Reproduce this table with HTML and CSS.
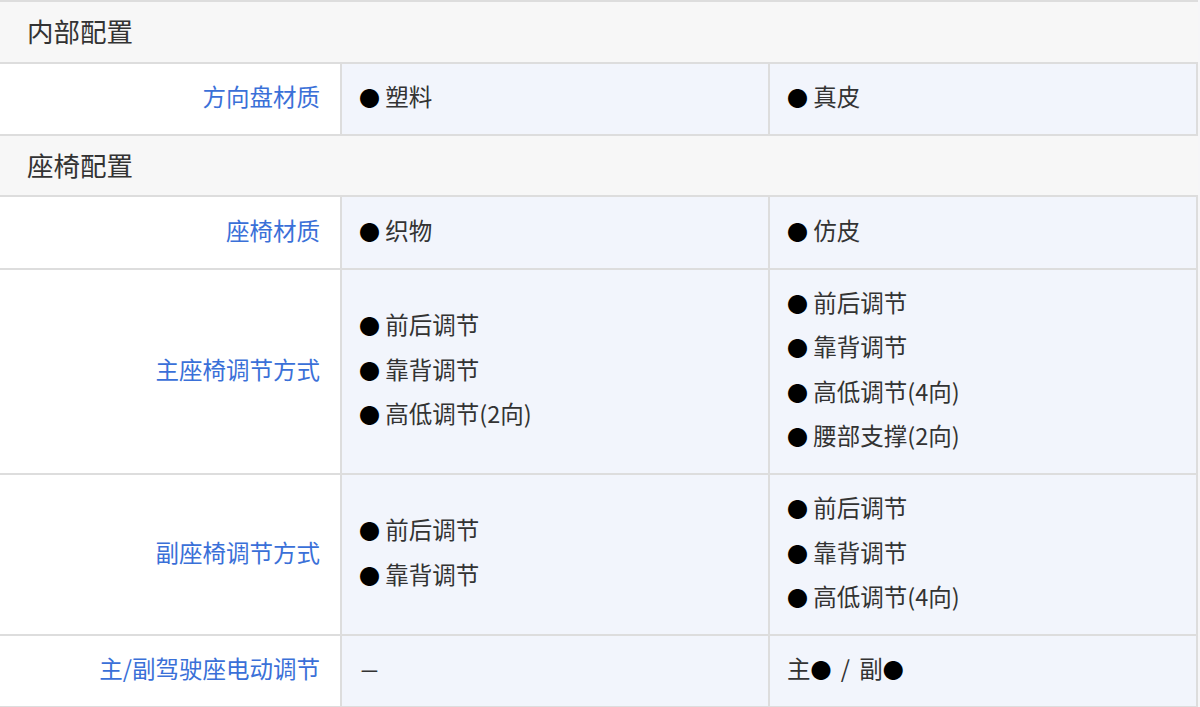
FILE: index.html
```html
<!DOCTYPE html>
<html lang="zh-CN">
<head>
<meta charset="utf-8">
<title>配置</title>
<link rel="stylesheet" href="styles.css">
</head>
<body>
<div class="table">
  <div class="section">内部配置</div>
  <div class="row">
    <div class="label">方向盘材质</div>
    <div class="val"><div class="item"><span class="dot">●</span> 塑料</div></div>
    <div class="val"><div class="item"><span class="dot">●</span> 真皮</div></div>
  </div>
  <div class="section">座椅配置</div>
  <div class="row">
    <div class="label">座椅材质</div>
    <div class="val"><div class="item"><span class="dot">●</span> 织物</div></div>
    <div class="val"><div class="item"><span class="dot">●</span> 仿皮</div></div>
  </div>
  <div class="row">
    <div class="label">主座椅调节方式</div>
    <div class="val">
      <div class="item"><span class="dot">●</span> 前后调节</div>
      <div class="item"><span class="dot">●</span> 靠背调节</div>
      <div class="item"><span class="dot">●</span> 高低调节(2向)</div>
    </div>
    <div class="val">
      <div class="item"><span class="dot">●</span> 前后调节</div>
      <div class="item"><span class="dot">●</span> 靠背调节</div>
      <div class="item"><span class="dot">●</span> 高低调节(4向)</div>
      <div class="item"><span class="dot">●</span> 腰部支撑(2向)</div>
    </div>
  </div>
  <div class="row">
    <div class="label">副座椅调节方式</div>
    <div class="val">
      <div class="item"><span class="dot">●</span> 前后调节</div>
      <div class="item"><span class="dot">●</span> 靠背调节</div>
    </div>
    <div class="val">
      <div class="item"><span class="dot">●</span> 前后调节</div>
      <div class="item"><span class="dot">●</span> 靠背调节</div>
      <div class="item"><span class="dot">●</span> 高低调节(4向)</div>
    </div>
  </div>
  <div class="row">
    <div class="label">主/副驾驶座电动调节</div>
    <div class="val"><div class="item"><span class="dash">–</span></div></div>
    <div class="val"><div class="item pair">主<span class="dot">●</span> / 副<span class="dot">●</span></div></div>
  </div>
</div>
</body>
</html>
```

FILE: styles.css
```css
html, body {
  margin: 0;
  padding: 0;
}
body {
  background: #f6f6f8;
  font-family: "Noto Sans CJK SC", "Noto Sans", sans-serif;
  color: #333;
}
.table {
  width: 1198px;
  border-top: 2px solid #dddddd;
  background: #fff;
}
.section {
  height: 61.5px;
  box-sizing: border-box;
  display: flex;
  align-items: center;
  padding-left: 27px;
  padding-bottom: 2px;
  font-size: 26.5px;
  background: #f7f7f7;
  border-bottom: 2px solid #dddddd;
  color: #333;
}
.row {
  display: grid;
  grid-template-columns: 342px 428px 428px;
  border-bottom: 2px solid #dddddd;
}
.label {
  display: flex;
  align-items: center;
  justify-content: flex-end;
  padding-right: 20px;
  padding-bottom: 5px;
  border-right: 2px solid #dddddd;
  font-size: 23.5px;
  color: #3a70d8;
  background: #fff;
}
.val {
  display: flex;
  flex-direction: column;
  justify-content: center;
  padding: 10.5px 0 15.5px 17px;
  border-right: 2px solid #dddddd;
  background: #f2f5fc;
  font-size: 23.5px;
}
.item {
  line-height: 44.3px;
  height: 44.3px;
  white-space: nowrap;
}
.pair {
  word-spacing: 4px;
}
.dash {
  display: inline-block;
  margin-left: 1px;
  transform: scaleX(1.5);
  transform-origin: left center;
}
.dot {
  color: #000;
  font-size: 21px;
}
```
